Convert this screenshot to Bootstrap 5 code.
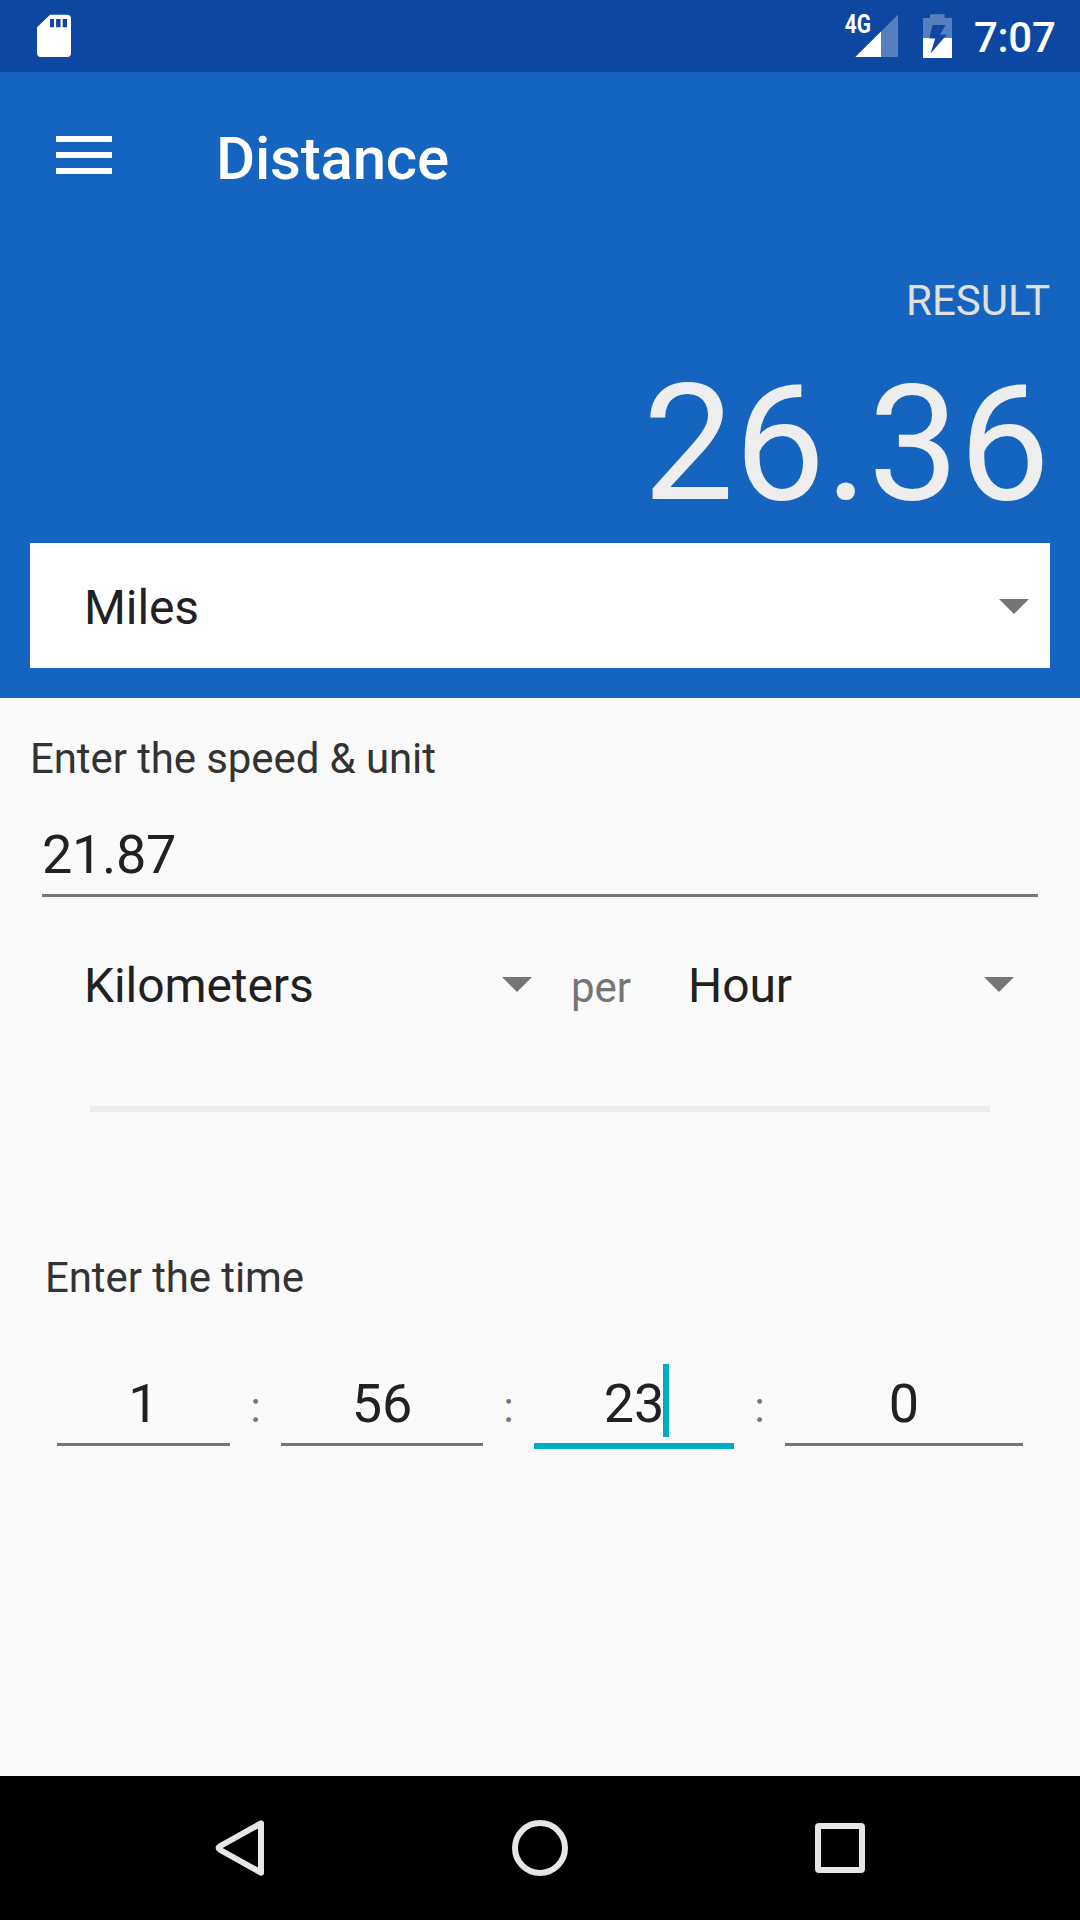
<!DOCTYPE html>
<html lang="en">
<head>
<meta charset="utf-8">
<meta name="viewport" content="width=device-width, initial-scale=1">
<title>Distance</title>
<link href="https://cdn.jsdelivr.net/npm/bootstrap@5.3.0/dist/css/bootstrap.min.css" rel="stylesheet">
<style>
body { font-family: Roboto, "Noto Sans", sans-serif; background: #fafafa; color: #212121; font-size: 42px; line-height: 50px; }
svg { display: block; flex: none; }
.screen { width: 1080px; height: 1920px; }
.statusbar { height: 72px; background: #0d47a1; padding: 0 24px 0 37px; }
.clock { width: 82px; font-weight: 500; line-height: 75px; letter-spacing: -0.3px; }
.topband { height: 626px; background: #1565c0; padding: 0 30px; }
.appbar { height: 168px; padding-left: 26px; }
.apptitle { font-size: 60px; font-weight: 500; line-height: 60px; margin-left: 104px; padding-top: 5px; letter-spacing: -0.2px; }
.result-caption { margin-top: 36px; color: #e0e0e0; }
.result-value { margin: 23px 0 4px; font-size: 162px; line-height: 190px; color: #eee; }
.picker { font-size: 48px; line-height: 60px; letter-spacing: -0.1px; }
.picker-card { height: 125px; padding: 2px 20px 0 54px; }
.picker-card span { padding-top: 2px; }
.caption { color: #333; letter-spacing: -0.1px; }
.content { padding: 36px 30px 0; }
.field { font-size: 54px; line-height: 64px; border-bottom: 3px solid #757575; }
.speed-field { margin: 38px 12px 0; height: 75px; padding-top: 1px; letter-spacing: -0.3px; }
.units { margin-top: 59px; padding: 0 36px 0 54px; height: 60px; }
.units svg { margin-bottom: 4px; }
.unit-a { width: 448px; }
.unit-b { width: 326px; }
.per { color: #757575; padding-top: 3px; margin-left: 39px; width: 117px; }
.rule { height: 6px; background: #eee; margin: 90px 60px 0; }
.time-caption { margin: 141px 0 0 15px; }
.time-row { margin: 69px 0 0 27px; }
.time-field { height: 74px; }
.time-field.active { height: 77px; border-bottom: 6px solid #00acc1; }
.w-h { width: 173px; } .w-m { width: 202px; } .w-s { width: 200px; } .w-ms { width: 238px; }
.colon { width: 51px; color: #757575; padding-top: 11px; }
.caret { top: -8px; left: 129px; width: 6px; height: 73px; background: #00acc1; }
.navkeys { height: 144px; background: #000; padding: 0 212px; }
</style>
</head>
<body>
<div class="screen d-flex flex-column overflow-hidden">
  <div class="statusbar d-flex justify-content-between text-white">
    <svg width="34" height="72" viewBox="0 0 34 72"><path fill="#fff" fill-rule="evenodd" d="M13 14.7H30Q34 14.7 34 18.7V53Q34 57 30 57H4Q0 57 0 53V27.3ZM13 19V27.3H17V19ZM19.1 19V27.3H23.5V19ZM25.7 19V27.3H30V19Z"/></svg>
    <div class="d-flex">
      <svg width="130" height="72" viewBox="844 0 130 72">
        <text x="844.7" y="33.4" font-size="25.5" font-weight="700" fill="#fff" textLength="26.2" lengthAdjust="spacingAndGlyphs">4G</text>
        <path fill="#567fbd" d="M898 14.5V57H881V31.5Z"/><path fill="#fff" d="M881 31.5V57H855.3Z"/>
        <path fill="#567fbd" d="M930 14.3H944.6V18H952V38H923V18H930Z"/><path fill="#fff" d="M923 38H952V58H923Z"/>
        <path fill="#0d47a1" d="M932.5 25H945.7L940 34.4H947L930.5 53.5L935.2 38.5H929.3Z"/>
      </svg>
      <div class="clock">7:07</div>
    </div>
  </div>

  <header class="topband">
    <div class="appbar d-flex align-items-center text-white">
      <svg width="56" height="40" viewBox="0 0 56 40"><path fill="#fff" d="M0 0H56V6H0ZM0 16H56V22H0ZM0 32H56V38H0Z"/></svg>
      <div class="apptitle">Distance</div>
    </div>
    <div class="result-caption text-end">RESULT</div>
    <div class="result-value text-end">26.36</div>
    <div class="picker picker-card bg-white d-flex align-items-center justify-content-between">
      <span>Miles</span>
      <svg width="31" height="15" viewBox="0 0 31 15"><path fill="#757575" d="M0 0H30L15 15Z"/></svg>
    </div>
  </header>

  <main class="content flex-grow-1">
    <div class="caption">Enter the speed &amp; unit</div>
    <div class="field speed-field">21.87</div>
    <div class="units d-flex align-items-center">
      <div class="picker unit-a d-flex align-items-center justify-content-between"><span>Kilometers</span>
        <svg width="30" height="15" viewBox="0 0 30 15"><path fill="#757575" d="M0 0H30L15 15Z"/></svg></div>
      <div class="per">per</div>
      <div class="picker unit-b d-flex align-items-center justify-content-between"><span>Hour</span>
        <svg width="30" height="15" viewBox="0 0 30 15"><path fill="#757575" d="M0 0H30L15 15Z"/></svg></div>
    </div>
    <div class="rule"></div>
    <div class="caption time-caption">Enter the time</div>
    <div class="time-row d-flex align-items-start text-center">
      <div class="field time-field w-h">1</div>
      <div class="colon">:</div>
      <div class="field time-field w-m">56</div>
      <div class="colon">:</div>
      <div class="field time-field active w-s position-relative">23<span class="caret position-absolute"></span></div>
      <div class="colon">:</div>
      <div class="field time-field w-ms">0</div>
    </div>
  </main>

  <nav class="navkeys d-flex align-items-center justify-content-between">
    <svg width="56" height="56" viewBox="212 1820 56 56"><path fill="none" stroke="#e6e6e6" stroke-width="6" stroke-linejoin="round" d="M261 1823.3V1872.7L220.3 1850Q217 1848 220.3 1846Z"/></svg>
    <svg width="56" height="56" viewBox="0 0 56 56"><circle cx="28" cy="28" r="25" fill="none" stroke="#e6e6e6" stroke-width="6"/></svg>
    <svg width="56" height="56" viewBox="0 0 56 56"><rect x="6" y="6" width="44" height="44" rx="1" fill="none" stroke="#e6e6e6" stroke-width="6" stroke-linejoin="round"/></svg>
  </nav>
</div>
<script src="https://cdn.jsdelivr.net/npm/bootstrap@5.3.0/dist/js/bootstrap.bundle.min.js"></script>
</body>
</html>
